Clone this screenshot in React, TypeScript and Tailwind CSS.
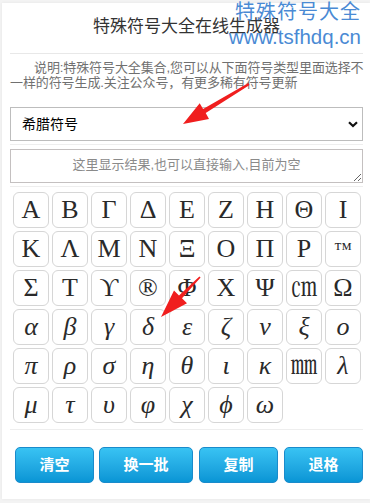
import React from 'react';

const rows: string[][] = [
  ['Α', 'Β', 'Γ', 'Δ', 'Ε', 'Ζ', 'Η', 'Θ', 'Ι'],
  ['Κ', 'Λ', 'Μ', 'Ν', 'Ξ', 'Ο', 'Π', 'Ρ', '™'],
  ['Σ', 'Τ', 'ϒ', '®', 'Φ', 'Χ', 'Ψ', '㎝', 'Ω'],
  ['α', 'β', 'γ', 'δ', 'ε', 'ζ', 'ν', 'ξ', 'ο'],
  ['π', 'ρ', 'σ', 'η', 'θ', 'ι', 'κ', '㎜', 'λ'],
  ['μ', 'τ', 'υ', 'φ', 'χ', 'ϕ', 'ω'],
];

const isLower = (s: string) => s !== s.toUpperCase();

function ActionButton({ label, w }: { label: string; w: string }) {
  return (
    <button
      className={`${w} h-[36px] rounded-[5px] border border-[#1a8bcb] bg-gradient-to-b from-[#38c3f3] to-[#0895d5] text-[15px] font-bold text-white`}
    >
      {label}
    </button>
  );
}

function SymbolKey({ s }: { s: string }) {
  const lower = isLower(s);
  return (
    <button className="flex h-[36px] items-center justify-center rounded-[6px] border border-[#d6d6d6] bg-white text-[#2a2a2a]">
      <span
        className={`font-['Liberation_Serif','DejaVu_Serif','Noto_Serif_CJK_SC','Noto_Sans_CJK_SC',serif] leading-none ${
          lower ? 'italic' : ''
        } ${s === '™' ? 'text-[18px]' : 'text-[26px]'}`}
      >
        {s}
      </span>
    </button>
  );
}

export default function App() {
  return (
    <div className="relative min-h-screen bg-[#f3f3f3] pt-[3px] pl-[2px] font-['Liberation_Sans','Noto_Sans_CJK_SC',sans-serif]">
      <div className="bg-white pl-[8px] pr-[7px] pb-[16px] shadow-[0_0_3px_rgba(0,0,0,0.06)]">
        {/* title */}
        <div className="flex h-[51px] items-center justify-center border-b border-[#e8e8e8] pb-[2px] text-[17px] text-[#333]">
          特殊符号大全在线生成器
        </div>

        {/* description */}
        <p className="mr-[-6px] mt-[6px] indent-[24px] text-[13px] leading-[15px] tracking-[-0.1px] text-[#707070]">
          说明:特殊符号大全集合,您可以从下面符号类型里面选择不一样的符号生成.关注公众号，有更多稀有符号更新
        </p>

        {/* select */}
        <div className="mt-[17px] border-b border-[#eeeeee] pb-[3px]">
          <div className="relative">
            <select className="h-[34px] w-full appearance-none border border-[#bdbdbd] bg-white pl-[11px] text-[14px] text-black outline-none">
              <option>希腊符号</option>
            </select>
            <svg className="pointer-events-none absolute right-[5px] top-[14px]" width="10" height="7" viewBox="0 0 10 7">
              <path d="M1 1.2 L5 5 L9 1.2" fill="none" stroke="#111" strokeWidth="2.2" />
            </svg>
          </div>
        </div>

        {/* result */}
        <div className="mt-[4px] border-b border-[#eeeeee] pb-[3px]">
          <textarea
            className="block h-[34px] w-full border border-[#c4c0c0] px-2 pt-[6px] text-center text-[13px] leading-[18px] text-[#333] outline-none placeholder:text-[#8a8a8a]"
            placeholder="这里显示结果,也可以直接输入,目前为空"
          />
        </div>

        {/* symbols */}
        <div className="border-b border-[#eeeeee] pb-[6px]">
          <div className="ml-[3px] mt-[5px] grid grid-cols-[repeat(9,36px)] gap-[3px]">
            {rows.flat().map((s, i) => (
              <SymbolKey key={i} s={s} />
            ))}
          </div>
        </div>

        {/* actions */}
        <div className="ml-[5px] mt-[17px] flex">
          <ActionButton label="清空" w="w-[80px]" />
          <div className="ml-[5px]">
            <ActionButton label="换一批" w="w-[94px]" />
          </div>
          <div className="ml-[6px]">
            <ActionButton label="复制" w="w-[79px]" />
          </div>
          <div className="ml-[6px]">
            <ActionButton label="退格" w="w-[79px]" />
          </div>
        </div>
      </div>

      {/* watermark */}
      <div className="pointer-events-none absolute right-[9px] top-[1px] flex flex-col items-end text-[#4a8ad4]">
        <span className="text-[20px] leading-[22px] tracking-[1px]">特殊符号大全</span>
        <span className="mt-[3px] text-[20.5px] leading-[22px]">www.tsfhdq.cn</span>
      </div>

      {/* red arrows */}
      <svg className="pointer-events-none absolute left-0 top-0" width="370" height="503">
        <polygon
          fill="#f01e1e"
          points="183,124 209,119 205.7,113.1 249.6,85 248.4,83 203.1,108.9 199.7,103.3"
        />
        <polygon
          fill="#f01e1e"
          points="161,317 187,303.2 182,298.3 200.6,277.6 199.4,276.4 179,295.5 174,290.6"
        />
      </svg>
    </div>
  );
}
